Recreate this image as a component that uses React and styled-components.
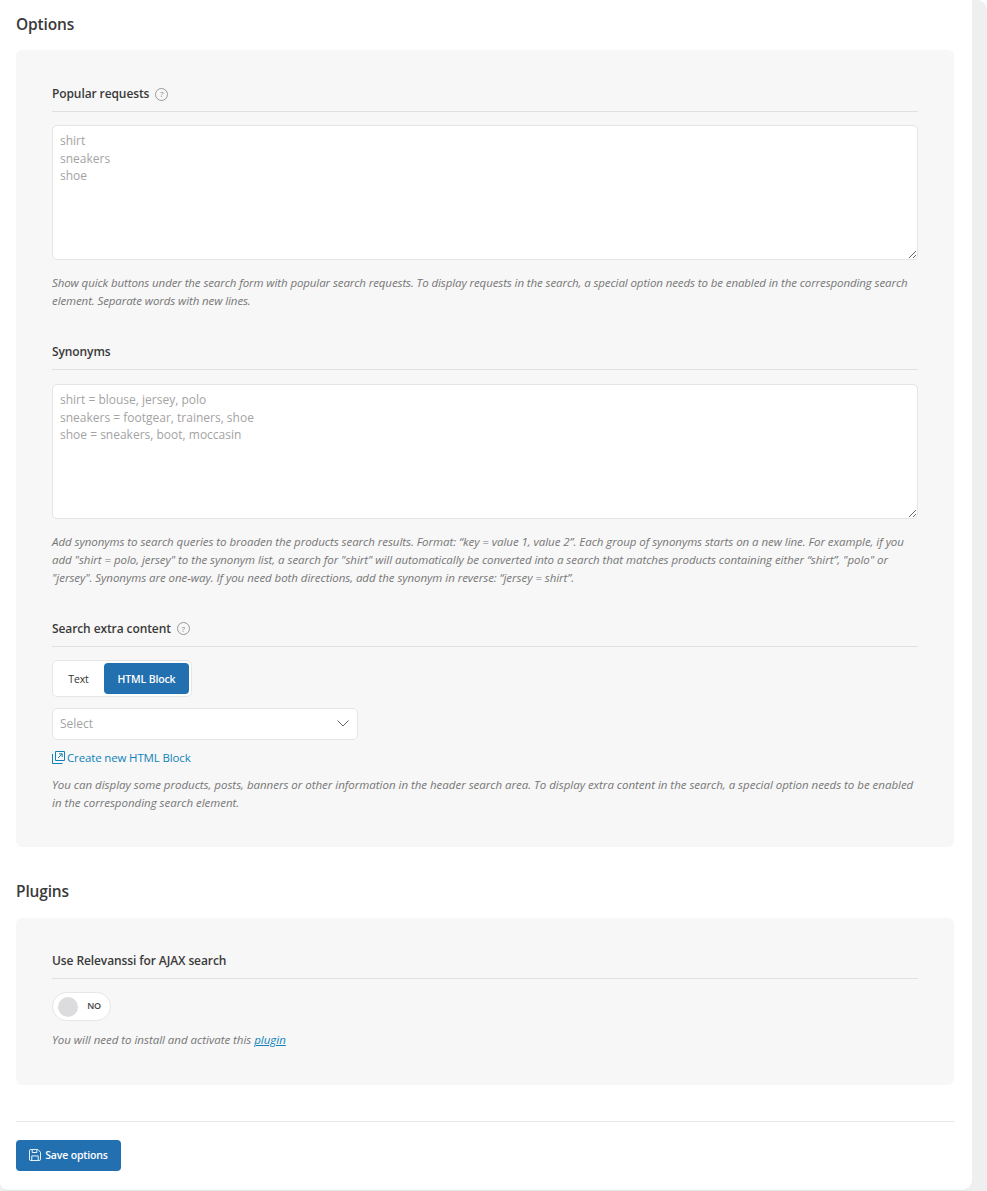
import React from "react";
import styled, { createGlobalStyle } from "styled-components";

const Global = createGlobalStyle`
  * { box-sizing: border-box; }
  html, body { margin: 0; padding: 0; background: #fff; }
  body { font-family: "Open Sans", "Noto Sans", "Liberation Sans", sans-serif; }
`;

const Shell = styled.div`
  height: 1191px;
  background: #efefef;
  border-radius: 0 10px 0 0;
`;

const Page = styled.div`
  width: 972px;
  height: 1191px;
  padding: 0 18px 0 16px;
  background: #fff;
  border-bottom: 1px solid #e6e6e6;
  border-radius: 0 0 10px 8px;
`;

const SectionTitle = styled.h2`
  margin: 0;
  height: ${(props) => props.height}px;
  padding-top: ${(props) => props.top}px;
  font-size: 15.5px;
  line-height: 20px;
  font-weight: 600;
  color: #3a3a3a;
  letter-spacing: -0.15px;
`;

const Card = styled.section`
  padding: ${(props) => props.top}px 36px 0;
  height: ${(props) => props.height}px;
  background: #f7f7f7;
  border-radius: 6px;
`;

const FieldHead = styled.div`
  display: flex;
  align-items: center;
  gap: 6px;
  height: ${(props) => props.height || 29}px;
  padding-bottom: 7px;
  border-bottom: 1px solid #e0e0e0;
`;

const Label = styled.span`
  font-size: 12px;
  line-height: 18px;
  font-weight: 600;
  color: #3a3a3a;
  letter-spacing: -0.1px;
`;

const HelpDot = styled.span`
  display: inline-flex;
  align-items: center;
  justify-content: center;
  width: 13px;
  height: 13px;
  border: 1px solid #9a9a9a;
  border-radius: 50%;
  font-size: 8px;
  line-height: 1;
  color: #888;
`;

const Area = styled.textarea`
  display: block;
  width: 100%;
  height: 135px;
  margin-top: ${(props) => props.top}px;
  padding: 6px 7px;
  background: #fff;
  border: 1px solid #e4e4e4;
  border-radius: 5px;
  outline: none;
  resize: vertical;
  font-family: inherit;
  font-size: 12px;
  line-height: 17.5px;
  &::placeholder { color: #a3a3a3; opacity: 1; }
`;

const Hint = styled.p`
  margin: ${(props) => props.top}px 0 ${(props) => props.bottom || 0}px;
  font-size: 11.5px;
  line-height: 18px;
  font-style: italic;
  color: #767676;
  letter-spacing: ${(props) => props.spacing || -0.02}px;
`;

const TextLink = styled.a`
  color: #0f83b8;
  text-decoration: underline;
`;

const Segments = styled.div`
  display: inline-flex;
  gap: 2px;
  height: 37px;
  margin-top: 13px;
  padding: 2px;
  background: #fff;
  border: 1px solid #e6e6e6;
  border-radius: 5px;
  vertical-align: top;
`;

const Segment = styled.button`
  width: ${(props) => props.width}px;
  padding: 0;
  border: 0;
  border-radius: 4px;
  background: ${(props) => (props.$active ? "#2270b0" : "#fff")};
  color: ${(props) => (props.$active ? "#fff" : "#333")};
  font-family: inherit;
  font-size: 10.5px;
  font-weight: ${(props) => (props.$active ? 600 : 500)};
  letter-spacing: -0.15px;
`;

const SelectBox = styled.div`
  display: flex;
  align-items: center;
  justify-content: space-between;
  width: 306px;
  height: 32px;
  margin-top: 11px;
  padding: 0 8px 1px 7px;
  background: #fff;
  border: 1px solid #e4e4e4;
  border-radius: 5px;
  font-size: 12px;
  color: #a3a3a3;
`;

const CreateLink = styled.a`
  display: flex;
  align-items: center;
  gap: 2px;
  height: 18px;
  margin-top: 8px;
  font-size: 11.5px;
  letter-spacing: -0.15px;
  color: #0f83b8;
`;

const Toggle = styled.div`
  display: flex;
  align-items: center;
  justify-content: space-between;
  width: 59px;
  height: 29px;
  margin-top: 13px;
  padding: 0 9px 0 5px;
  background: #fff;
  border: 1px solid #e6e6e6;
  border-radius: 15px;
`;

const Knob = styled.span`
  width: 20px;
  height: 20px;
  border-radius: 50%;
  background: #dcdcde;
`;

const ToggleText = styled.span`
  margin-bottom: 2px;
  font-size: 9px;
  font-weight: 600;
  letter-spacing: -0.15px;
  color: #444;
`;

const Footer = styled.div`
  margin-top: 36px;
  padding-top: 18px;
  border-top: 1px solid #e6e6e6;
`;

const SaveButton = styled.button`
  display: flex;
  align-items: center;
  justify-content: center;
  gap: 4px;
  width: 105px;
  height: 31px;
  padding: 0 0 1px;
  border: 0;
  border-radius: 4px;
  background: #2270b0;
  color: #fff;
  font-family: inherit;
  font-size: 10.5px;
  font-weight: 600;
  letter-spacing: -0.15px;
`;

const Help = () => <HelpDot>?</HelpDot>;

const App = () => (
  <Shell>
    <Global />
    <Page>
      <SectionTitle top={14} height={50}>Options</SectionTitle>
      <Card top={34} height={797}>
        <FieldHead height={28}>
          <Label>Popular requests</Label>
          <Help />
        </FieldHead>
        <Area top={13} readOnly placeholder={"shirt\nsneakers\nshoe"} />
        <Hint top={14} bottom={32} spacing={-0.1}>
          Show quick buttons under the search form with popular search requests. To display requests in the search, a special option needs to be enabled in the corresponding search element. Separate words with new lines.
        </Hint>
        <FieldHead height={28}>
          <Label>Synonyms</Label>
        </FieldHead>
        <Area top={14} readOnly placeholder={"shirt = blouse, jersey, polo\nsneakers = footgear, trainers, shoe\nshoe = sneakers, boot, moccasin"} />
        <Hint top={14} bottom={31} spacing={-0.05}>
          Add synonyms to search queries to broaden the products search results. Format: “key = value 1, value 2”. Each group of synonyms starts on a new line. For example, if you add "shirt = polo, jersey" to the synonym list, a search for "shirt" will automatically be converted into a search that matches products containing either “shirt”, "polo" or "jersey". Synonyms are one-way. If you need both directions, add the synonym in reverse: “jersey = shirt”.
        </Hint>
        <FieldHead>
          <Label>Search extra content</Label>
          <Help />
        </FieldHead>
        <Segments>
          <Segment width={47}>Text</Segment>
          <Segment width={85} $active>HTML Block</Segment>
        </Segments>
        <SelectBox>
          Select
          <svg width="12" height="7" viewBox="0 0 12 7" fill="none" stroke="#666" strokeWidth="1">
            <path d="M.5.5L6 6l5.5-5.5" />
          </svg>
        </SelectBox>
        <CreateLink>
          <svg width="13" height="14" viewBox="0 0 13 14" fill="none" stroke="#0f83b8" strokeWidth="1">
            <path d="M3.5 1.5h9v9h-9zM.5 4v9.5h10M6 8l4-4M7 3.8h3.2V7" />
          </svg>
          Create new HTML Block
        </CreateLink>
        <Hint top={10}>
          You can display some products, posts, banners or other information in the header search area. To display extra content in the search, a special option needs to be enabled in the corresponding search element.
        </Hint>
      </Card>
      <SectionTitle top={34} height={71}>Plugins</SectionTitle>
      <Card top={32} height={167}>
        <FieldHead>
          <Label>Use Relevanssi for AJAX search</Label>
        </FieldHead>
        <Toggle>
          <Knob />
          <ToggleText>NO</ToggleText>
        </Toggle>
        <Hint top={10}>
          You will need to install and activate this <TextLink>plugin</TextLink>
        </Hint>
      </Card>
      <Footer>
        <SaveButton>
          <svg width="12" height="12" viewBox="0 0 13 13" fill="none" stroke="#fff" strokeWidth="1">
            <path d="M.5 2A1.5 1.5 0 0 1 2 .5h7.5l3 3V11a1.5 1.5 0 0 1-1.5 1.5H2A1.5 1.5 0 0 1 .5 11zM3.5.8v3h5v-3M3 12.3V7.5h7v4.8" />
          </svg>
          Save options
        </SaveButton>
      </Footer>
    </Page>
  </Shell>
);

export default App;
